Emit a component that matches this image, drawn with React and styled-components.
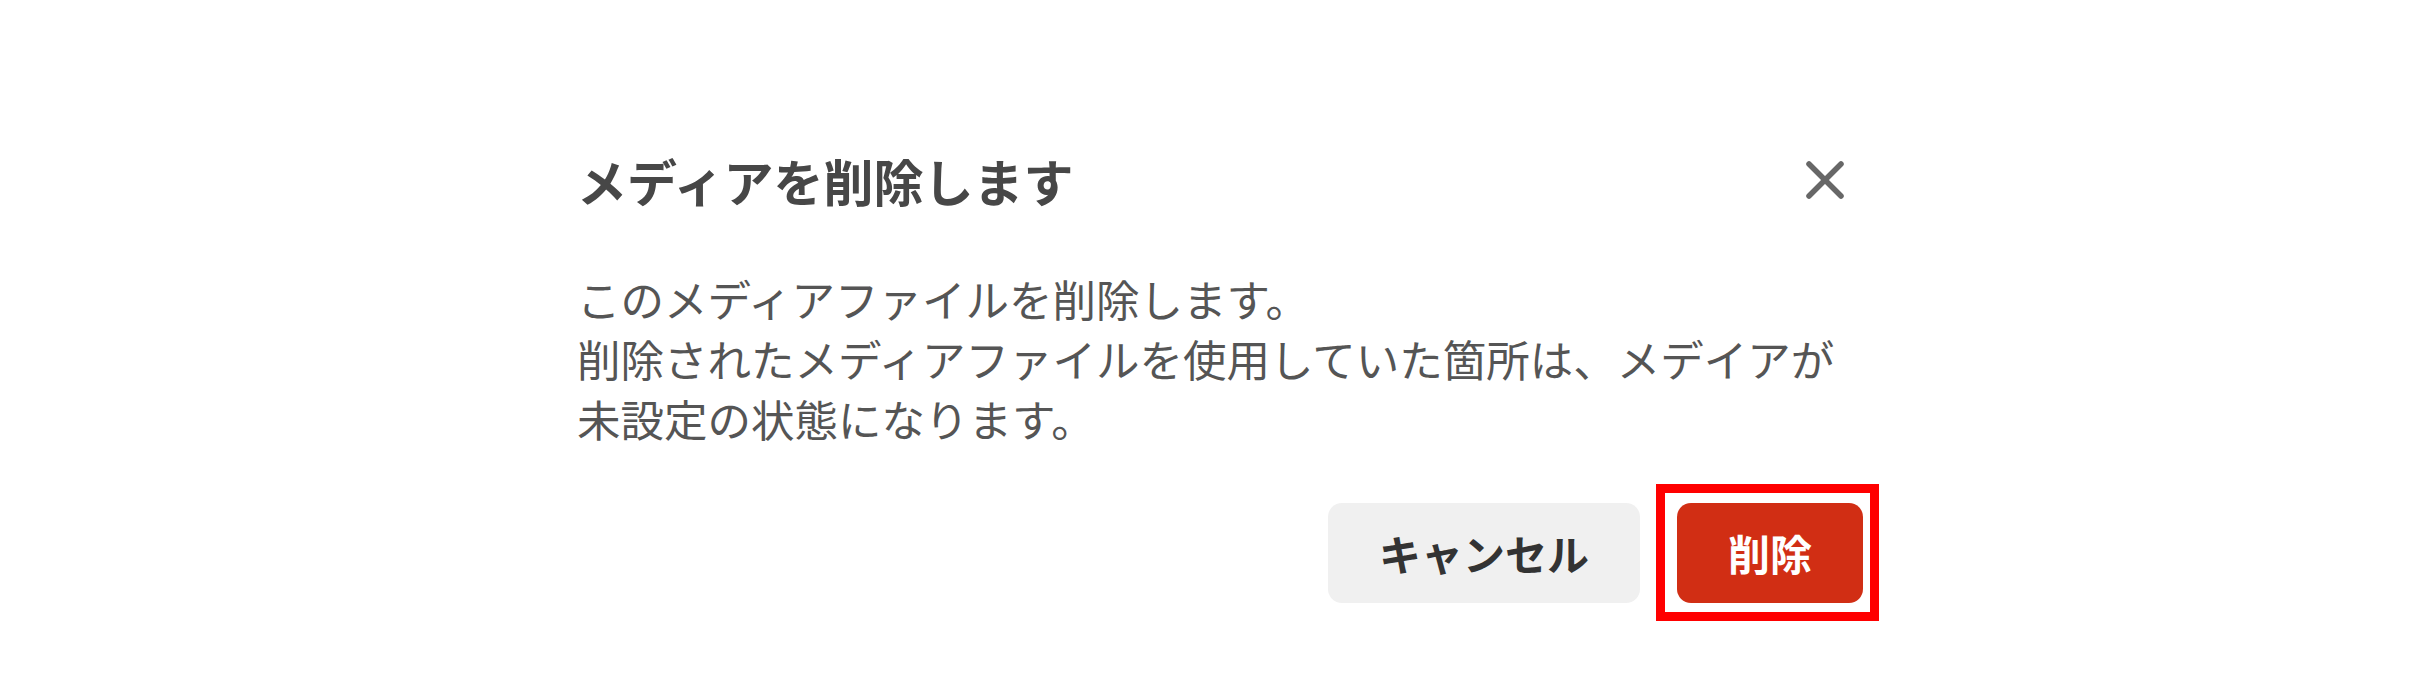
import React from "react";
import styled, { createGlobalStyle } from "styled-components";

const GlobalStyle = createGlobalStyle`
  html, body {
    margin: 0;
    padding: 0;
    background: #ffffff;
  }
  body {
    font-family: "Noto Sans CJK JP", "Noto Sans", sans-serif;
  }
`;

const Page = styled.div`
  width: 2425px;
  height: 692px;
  box-sizing: border-box;
  padding: 142px 0 0 577px;
  background: #ffffff;
`;

const Dialog = styled.section`
  width: 1286px;
  display: flex;
  flex-direction: column;
`;

const Header = styled.header`
  display: flex;
  align-items: center;
  justify-content: space-between;
  padding-right: 18px;
`;

const Title = styled.h2`
  margin: 0;
  font-size: 50px;
  line-height: 76px;
  font-weight: 700;
  color: #474747;
`;

const CloseButton = styled.button`
  width: 40px;
  height: 40px;
  padding: 0;
  border: none;
  background: transparent;
  display: flex;
  align-items: center;
  justify-content: center;
  cursor: pointer;
  color: #676767;
`;

const Body = styled.p`
  margin: 51px 0 0;
  font-size: 43.5px;
  line-height: 60px;
  font-weight: 400;
  color: #555555;
  white-space: nowrap;
`;

const Footer = styled.footer`
  margin-top: 54px;
  display: flex;
  justify-content: flex-end;
  gap: 37px;
`;

const Button = styled.button`
  position: relative;
  height: 100px;
  padding: 0 51px;
  border: none;
  border-radius: 14px;
  font-family: "Noto Sans CJK JP", "Noto Sans", sans-serif;
  font-size: 42px;
  font-weight: 700;
  line-height: 1;
  cursor: pointer;
  background: ${(p) => (p.$danger ? "#d12e14" : "#f0f0f0")};
  color: ${(p) => (p.$danger ? "#ffffff" : "#333333")};

  ${(p) =>
    p.$highlight &&
    `
    &::after {
      content: "";
      position: absolute;
      inset: -19px -16px -18px -21px;
      border: 9px solid #ff0000;
      pointer-events: none;
    }
  `}
`;

const CloseIcon = () => (
  <svg width="40" height="40" viewBox="0 0 40 40" aria-hidden="true">
    <line x1="4" y1="4" x2="36" y2="36" stroke="currentColor" strokeWidth="5.5" strokeLinecap="round" />
    <line x1="36" y1="4" x2="4" y2="36" stroke="currentColor" strokeWidth="5.5" strokeLinecap="round" />
  </svg>
);

export default function App() {
  return (
    <>
      <GlobalStyle />
      <Page>
        <Dialog role="dialog" aria-label="メディアを削除します">
          <Header>
            <Title>メディアを削除します</Title>
            <CloseButton aria-label="閉じる">
              <CloseIcon />
            </CloseButton>
          </Header>
          <Body>
            このメディアファイルを削除します。
            <br />
            削除されたメディアファイルを使用していた箇所は、メデイアが
            <br />
            未設定の状態になります。
          </Body>
          <Footer>
            <Button>キャンセル</Button>
            <Button $danger $highlight>削除</Button>
          </Footer>
        </Dialog>
      </Page>
    </>
  );
}
